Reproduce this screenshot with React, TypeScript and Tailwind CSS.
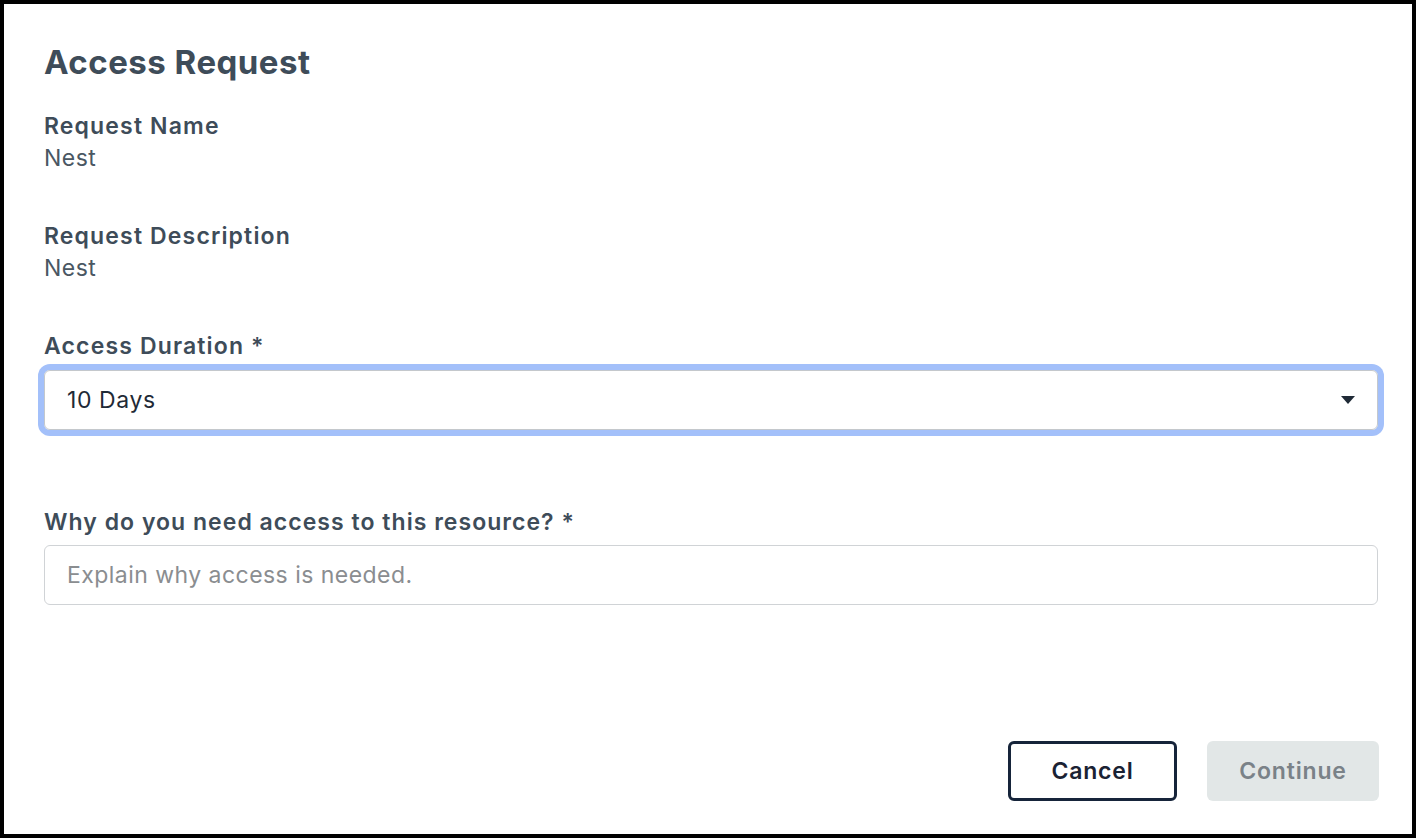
import React from 'react';

const LABEL = "text-[23px] leading-[28px] font-semibold tracking-[0.05em] text-[#3e4c59]";
const VALUE = "mt-[4px] text-[23px] leading-[28px] tracking-[0.02em] text-[#4a5763]";

export default function App() {
  return (
    <div className="flex h-[838px] w-[1416px] flex-col border-4 border-black bg-white pl-[40px] pr-[34px] pb-[33px] font-['Inter',sans-serif]">
      <h1 className="mt-[36px] text-[33px] leading-[44px] font-bold tracking-[0.015em] text-[#3e4c59]">Access Request</h1>

      <div className="mt-[28px] flex flex-col">
        <span className={LABEL}>Request Name</span>
        <span className={VALUE}>Nest</span>
      </div>

      <div className="mt-[50px] flex flex-col">
        <span className={LABEL}>Request Description</span>
        <span className={VALUE}>Nest</span>
      </div>

      <div className="mt-[50px] flex flex-col">
        <span className={LABEL}>Access Duration *</span>
        <div className="mt-[10px] flex h-[60px] items-center justify-between rounded-[6px] border border-[#c4c8cc] pl-[22px] pr-[22px] ring-[6px] ring-[#a3c0fa]">
          <span className="text-[23px] tracking-[0.025em] text-[#1f2a36]">10 Days</span>
          <svg width="14" height="9" viewBox="0 0 14 9">
            <path d="M0 0 L14 0 L7 8 Z" fill="#1f2a36" />
          </svg>
        </div>
      </div>

      <div className="mt-[78px] flex flex-col">
        <span className={LABEL + " tracking-[0.045em]"}>Why do you need access to this resource? *</span>
        <input
          className="mt-[9px] h-[60px] rounded-[6px] border border-[#d0d3d6] pl-[22px] text-[23px] tracking-[0.02em] text-[#1f2a36] outline-none placeholder:text-[#8a8d90]"
          placeholder="Explain why access is needed."
        />
      </div>

      <div className="-mr-[1px] mt-auto flex justify-end gap-[30px]">
        <button className="h-[60px] w-[169px] rounded-[6px] border-[3px] border-[#16243a] text-[23px] font-semibold tracking-[0.035em] text-[#1a2233]">Cancel</button>
        <button className="h-[60px] w-[172px] rounded-[6px] bg-[#e2e7e7] text-[23px] font-semibold tracking-[0.035em] text-[#7a8288]">Continue</button>
      </div>
    </div>
  );
}
